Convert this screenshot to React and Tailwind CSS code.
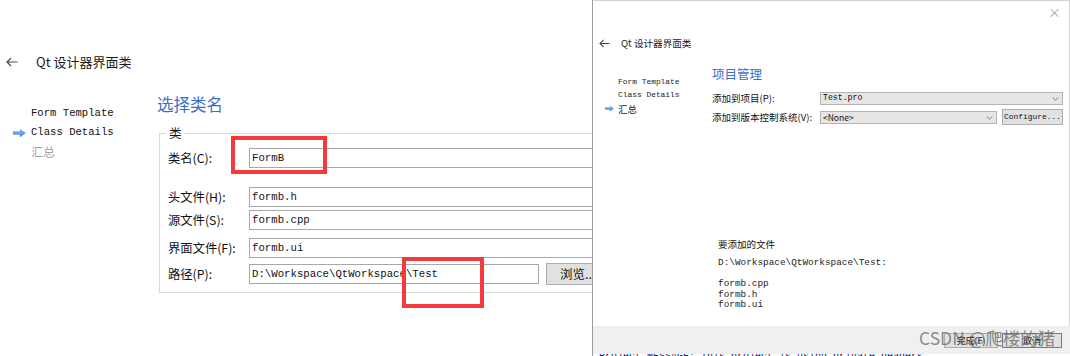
import React from "react";

function BackArrow({ className }) {
  return (
    <svg className={className} viewBox="0 0 12 10" fill="none">
      <path d="M11.5 5H1M5 1L1 5l4 4" stroke="#4a4a4a" strokeWidth="1.2" />
    </svg>
  );
}

function BlueArrow({ className }) {
  return (
    <svg className={className} viewBox="0 0 14 10">
      <defs>
        <linearGradient id="ba" x1="0" y1="0" x2="0" y2="1">
          <stop offset="0" stopColor="#8cc0f5" />
          <stop offset="1" stopColor="#3f7fd6" />
        </linearGradient>
      </defs>
      <path d="M0 3h7.5V0.3L14 5l-6.5 4.7V7H0z" fill="url(#ba)" />
    </svg>
  );
}

function Chevron({ className }) {
  return (
    <svg className={className} viewBox="0 0 8 5" fill="none">
      <path d="M0.5 0.5L4 4l3.5-3.5" stroke="#555" strokeWidth="0.9" />
    </svg>
  );
}

function LeftRow({ label, value, mt, children }) {
  return (
    <div className={`flex items-center h-[20px] ${mt}`}>
      <div className="w-[81px] shrink-0 text-[12.3px] leading-[20px] text-[#111]">{label}</div>
      {children || (
        <div className="w-[420px] h-[20px] border border-[#a8a8a8] bg-white pl-[2px] flex items-center font-['Liberation_Mono',monospace] text-[10.7px] text-[#111]">
          {value}
        </div>
      )}
    </div>
  );
}

function LeftPanel() {
  return (
    <div className="relative w-[592px] h-full overflow-hidden bg-white shrink-0">
      <div className="h-[48px]" />
      <div className="flex items-center h-[28px]">
        <BackArrow className="ml-[6px] w-[12px] h-[10px]" />
        <span className="ml-[18px] text-[13px] leading-[28px] text-[#1a1a1a]">Qt 设计器界面类</span>
      </div>
      <div className="flex">
        <div className="w-[157px] shrink-0 pt-[28px] font-['Liberation_Mono',monospace] text-[10.6px]">
          <div className="flex items-center h-[19px] pl-[13px]">
            <div className="w-[18px]" />
            <span className="text-[#111]">Form Template</span>
          </div>
          <div className="flex items-center h-[19px] pl-[13px]">
            <div className="w-[18px]">
              <BlueArrow className="w-[13px] h-[10px]" />
            </div>
            <span className="text-[#111]">Class Details</span>
          </div>
          <div className="flex items-center h-[19px] pl-[13px]">
            <div className="w-[18px]" />
            <span className="font-['Noto_Sans_CJK_SC',sans-serif] text-[12px] text-[#a3a3a3]">汇总</span>
          </div>
        </div>
        <div className="flex-1 pt-[17px]">
          <div className="text-[16.5px] leading-[22px] text-[#3b6ec8]">选择类名</div>
          <div className="relative ml-[2px] mt-[18px] w-[480px] h-[160px] border border-[#dadada] pl-[8px]">
            <div className="absolute left-[6px] top-[-9px] px-[3px] bg-white text-[12.5px] leading-[16px] text-[#111]">类</div>
            <LeftRow label="类名(C):" value="FormB" mt="mt-[14px]" />
            <LeftRow label="头文件(H):" value="formb.h" mt="mt-[19px]" />
            <LeftRow label="源文件(S):" value="formb.cpp" mt="mt-[3px]" />
            <LeftRow label="界面文件(F):" value="formb.ui" mt="mt-[8px]" />
            <LeftRow label="路径(P):" mt="mt-[6px]">
              <div className="flex items-center">
                <div className="w-[290px] h-[20px] border border-[#a8a8a8] bg-white pl-[2px] flex items-center font-['Liberation_Mono',monospace] text-[10.7px] text-[#111]">
                  D:\Workspace\QtWorkspace\Test
                </div>
                <div className="ml-[7px] w-[70px] h-[22px] border border-[#adadad] bg-[#e1e1e1] pl-[13px] flex items-center text-[12.5px] text-[#111]">
                  浏览...
                </div>
              </div>
            </LeftRow>
          </div>
        </div>
      </div>
      <div className="absolute left-[231px] top-[136px] w-[96px] h-[38px] border-[4px] border-[#f43a3a]" />
      <div className="absolute left-[402px] top-[257px] w-[82px] h-[51px] border-[4px] border-[#f43a3a]" />
    </div>
  );
}

function RightPanel() {
  return (
    <div className="relative flex-1 h-full flex flex-col bg-white border-l border-[#9c9c9c]">
      <div className="flex-1 flex flex-col border-t border-r border-[#d2d2d2] overflow-hidden">
        <div className="h-[22px] flex justify-end items-center pr-[8px] text-[13px] text-[#a8a8a8]">×</div>
        <div className="mt-[12px] h-[16px] flex items-center pl-[6px]">
          <BackArrow className="w-[11px] h-[9px]" />
          <span className="ml-[11px] text-[9.6px] leading-[16px] text-[#1a1a1a]">Qt 设计器界面类</span>
        </div>
        <div className="flex">
          <div className="w-[119px] shrink-0 pt-[24px] font-['Liberation_Mono',monospace] text-[7.9px] text-[#222]">
            <div className="flex items-center h-[13.5px] pl-[12px]">
              <div className="w-[13px]" />
              <span>Form Template</span>
            </div>
            <div className="flex items-center h-[13.5px] pl-[12px]">
              <div className="w-[13px]" />
              <span>Class Details</span>
            </div>
            <div className="flex items-center h-[13.5px] pl-[12px]">
              <div className="w-[13px]">
                <BlueArrow className="w-[9px] h-[7px]" />
              </div>
              <span className="font-['Noto_Sans_CJK_SC',sans-serif] text-[9.5px]">汇总</span>
            </div>
          </div>
          <div className="flex-1 mr-[6px] pt-[15px]">
            <div className="text-[12.5px] leading-[16px] text-[#3b6ec8]">项目管理</div>
            <div className="mt-[8px] h-[16px] flex items-center">
              <div className="w-[108px] shrink-0 text-[9.5px] text-[#111]">添加到项目(P):</div>
              <div className="relative flex-1 h-[13px] border border-[#b4b4b4] bg-[#e6e6e6] pl-[2px] flex items-center font-['Liberation_Mono',monospace] text-[8.2px] text-[#111]">
                Test.pro
                <Chevron className="absolute right-[3px] top-[4px] w-[7px] h-[4px]" />
              </div>
            </div>
            <div className="mt-[3px] h-[16px] flex items-center">
              <div className="w-[108px] shrink-0 text-[9.5px] text-[#111] whitespace-nowrap">添加到版本控制系统(V):</div>
              <div className="relative w-[177px] h-[13px] border border-[#b4b4b4] bg-[#e6e6e6] pl-[2px] flex items-center font-['Noto_Sans_CJK_SC',sans-serif] text-[8.5px] text-[#111]">
                &lt;None&gt;
                <Chevron className="absolute right-[3px] top-[4px] w-[7px] h-[4px]" />
              </div>
              <div className="ml-[5px] flex-1 h-[16px] border border-[#adadad] bg-[#e1e1e1] flex items-center justify-center font-['Liberation_Mono',monospace] text-[7.9px] text-[#111]">
                Configure...
              </div>
            </div>
            <div className="mt-[113px] pl-[6px] text-[9.5px] leading-[12px] text-[#111]">要添加的文件</div>
            <div className="mt-[8px] pl-[6px] font-['Liberation_Mono',monospace] text-[9.4px] leading-[10.5px] text-[#222] font-medium whitespace-pre">
              {"D:\\Workspace\\QtWorkspace\\Test:\n\nformb.cpp\nformb.h\nformb.ui"}
            </div>
          </div>
        </div>
      </div>
      <div className="h-[28px] bg-[#f0f0f0] flex justify-end items-start pt-[7px] pr-[8px] gap-[4px]">
        <div className="w-[54px] h-[15px] border border-[#adadad] bg-[#e1e1e1] flex items-center justify-center text-[9px] text-[#111]">完成(F)</div>
        <div className="w-[60px] h-[15px] border border-[#7a7a7a] bg-[#e1e1e1] flex items-center justify-center text-[9px] text-[#111]">取消</div>
      </div>
      <div className="h-[2px] overflow-hidden bg-white">
        <div className="-mt-[2px] pl-[6px] text-[10px] leading-[10px] text-[#1c1c5a] font-['Liberation_Mono',monospace] whitespace-nowrap">
          Project MESSAGE: This project is using private headers
        </div>
      </div>
      <div className="absolute left-[326px] top-[327px] text-[17.5px] leading-[22px] text-[#6e6e6e]/80 whitespace-nowrap">
        CSDN @爬楼的猪
      </div>
    </div>
  );
}

export default function App() {
  return (
    <div className="w-[1070px] h-[356px] flex bg-white overflow-hidden font-['Noto_Sans_CJK_SC',sans-serif]">
      <LeftPanel />
      <RightPanel />
    </div>
  );
}
